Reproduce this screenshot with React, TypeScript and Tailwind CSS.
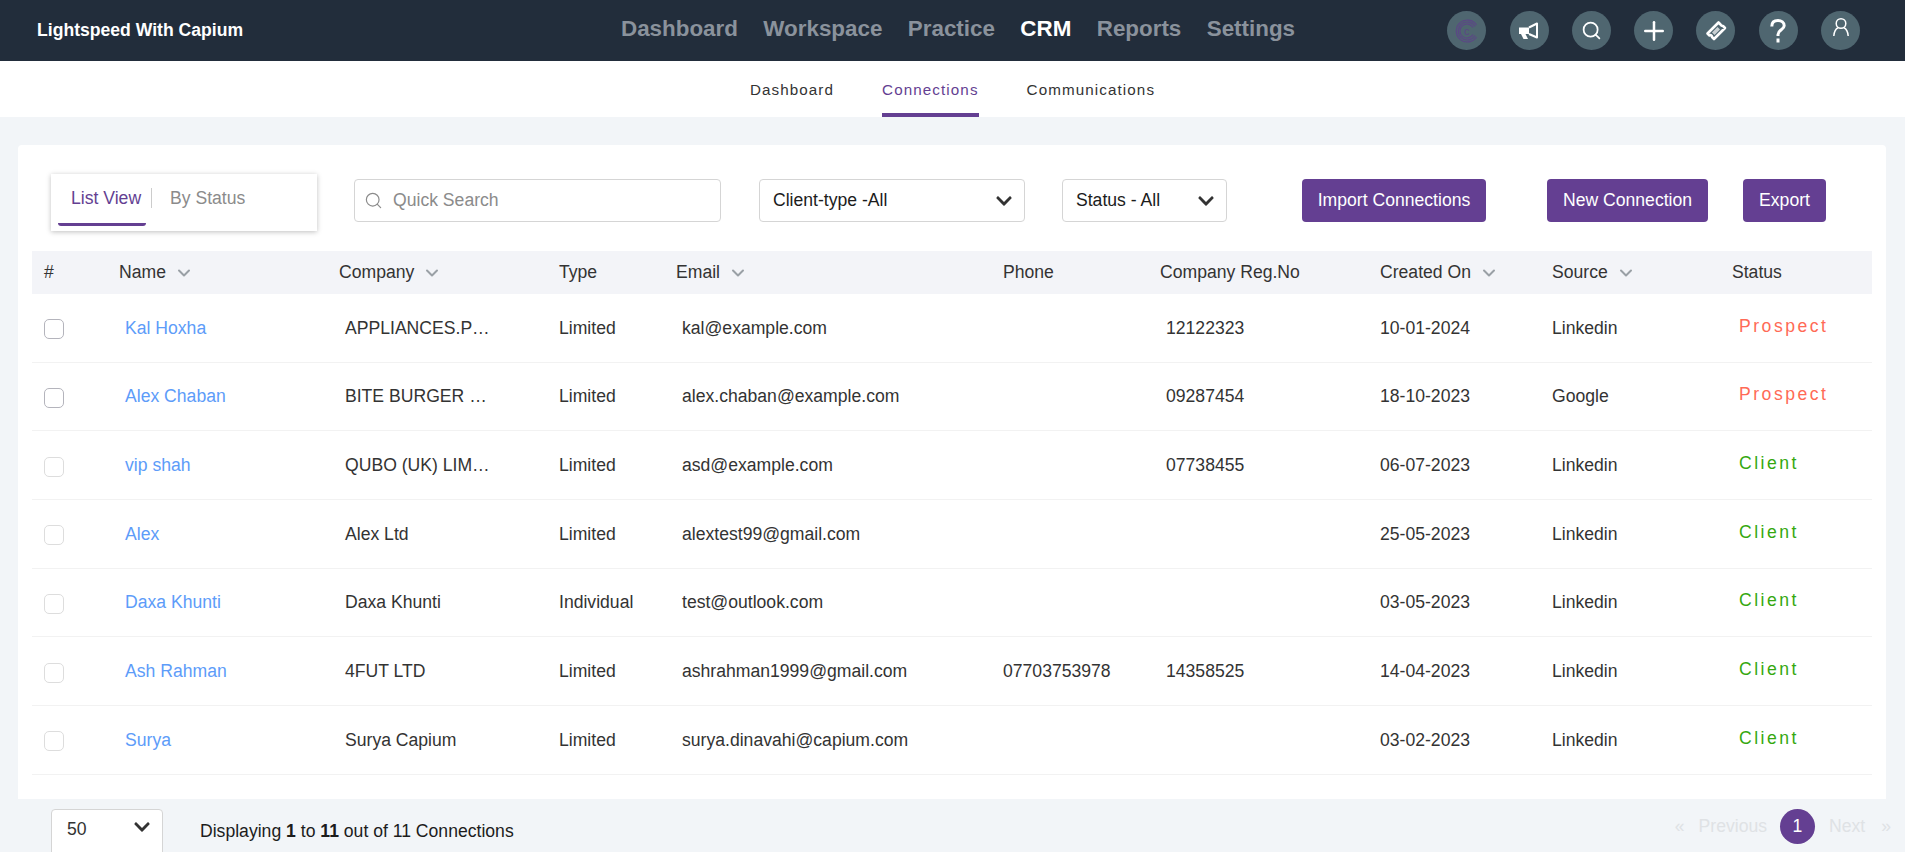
import React from 'react';
import { Search, Plus, ChevronDown } from 'lucide-react';
import { FaChevronDown } from 'react-icons/fa';

const mainNav = ['Dashboard', 'Workspace', 'Practice', 'CRM', 'Reports', 'Settings'];
const rowGrid = 'grid grid-cols-[87px_220px_220px_117px_327px_157px_220px_172px_180px_140px] items-center';

const rows = [
    { name: 'Kal Hoxha', company: 'APPLIANCES.P…', type: 'Limited', email: 'kal@example.com', phone: '', reg: '12122323', date: '10-01-2024', source: 'Linkedin', status: 'Prospect', dark: true },
    { name: 'Alex Chaban', company: 'BITE BURGER …', type: 'Limited', email: 'alex.chaban@example.com', phone: '', reg: '09287454', date: '18-10-2023', source: 'Google', status: 'Prospect', dark: true },
    { name: 'vip shah', company: 'QUBO (UK) LIM…', type: 'Limited', email: 'asd@example.com', phone: '', reg: '07738455', date: '06-07-2023', source: 'Linkedin', status: 'Client', dark: false },
    { name: 'Alex', company: 'Alex Ltd', type: 'Limited', email: 'alextest99@gmail.com', phone: '', reg: '', date: '25-05-2023', source: 'Linkedin', status: 'Client', dark: false },
    { name: 'Daxa Khunti', company: 'Daxa Khunti', type: 'Individual', email: 'test@outlook.com', phone: '', reg: '', date: '03-05-2023', source: 'Linkedin', status: 'Client', dark: false },
    { name: 'Ash Rahman', company: '4FUT LTD', type: 'Limited', email: 'ashrahman1999@gmail.com', phone: '07703753978', reg: '14358525', date: '14-04-2023', source: 'Linkedin', status: 'Client', dark: false },
    { name: 'Surya', company: 'Surya Capium', type: 'Limited', email: 'surya.dinavahi@capium.com', phone: '', reg: '', date: '03-02-2023', source: 'Linkedin', status: 'Client', dark: false },
];

const CapiumLogo = () => (
    <svg width="24" height="24" viewBox="0 0 24 24" fill="none" stroke="#5f3f8c" className="opacity-80">
        <path d="M21.5 6A11 11 0 1 0 21.5 18" strokeWidth="1.1" />
        <path d="M20 7.5A9 9 0 1 0 20 16.5" strokeWidth="1.1" />
        <path d="M18 8.5A7 7 0 1 0 18 15.5" strokeWidth="1.1" />
        <text x="9" y="16" fontSize="11" fill="#5f3f8c" stroke="none" fontFamily="Liberation Sans">c</text>
    </svg>
);

const MegaphoneIcon = () => (
    <svg width="22" height="22" viewBox="0 0 22 22" fill="none">
        <path d="M1 7.5H11V14H1Z" fill="white" />
        <path d="M3 14H7.5L10 19H5.5Z" fill="white" />
        <path d="M11 7.5L19 3.5V17.5L11 14" stroke="white" strokeWidth="2" strokeLinejoin="round" />
    </svg>
);

const TicketIcon = () => (
    <svg width="24" height="24" viewBox="0 0 24 24" fill="none">
        <path
            d="M3.5 14.5L14.5 3.5L16.5 5.5C17 6.5 18 7 19 7L21 9L10 20L8 18C8 17 7 15.5 5.5 16.5Z"
            stroke="white"
            strokeWidth="2.6"
            strokeLinejoin="round"
        />
        <path d="M8 13.5L13.5 8L16 10.5L10.5 16Z" fill="white" opacity="0.7" />
    </svg>
);

const QuestionIcon = () => (
    <svg width="16" height="24" viewBox="0 0 16 24" fill="none" stroke="white" strokeWidth="3">
        <path d="M1.8 7.5C1.8 3.5 4.5 1.6 8 1.6C11.5 1.6 14.2 3.6 14.2 6.8C14.2 10.8 8 10.8 8 15.5V17" />
        <path d="M8 19.5V23.5" />
    </svg>
);

const UserIcon = () => (
    <svg width="18" height="20" viewBox="0 0 18 20" fill="none" stroke="white" strokeWidth="1.5" className="-translate-y-[4px]">
        <circle cx="9" cy="6.5" r="4.8" />
        <path d="M1.8 19C2.2 14.5 4.5 11.5 6 10.8M16.2 19C15.8 14.5 13.5 11.5 12 10.8" />
    </svg>
);

const HeaderIcon = ({ children }: { children: React.ReactNode }) => (
    <div className="flex h-[39px] w-[39px] items-center justify-center rounded-full bg-[#4f6670] text-white">
        {children}
    </div>
);

const SortHead = ({ label }: { label: string }) => (
    <div className="flex items-center gap-[8px]">
        {label}
        <ChevronDown size={20} strokeWidth={2.4} className="mt-[2px] text-[#9aa0a6]" />
    </div>
);

const Select = ({ label, className }: { label: string; className: string }) => (
    <div className={`flex h-[43px] items-center justify-between rounded border border-[#d5d5d5] bg-white pl-[13px] pr-[11px] text-[17.6px] text-[#1c1c1c] ${className}`}>
        {label}
        <FaChevronDown size={18} className="text-[#333]" />
    </div>
);

const PurpleButton = ({ label, className }: { label: string; className: string }) => (
    <button className={`flex h-[43px] items-center justify-center rounded bg-[#643f92] text-[17.6px] text-white ${className}`}>
        {label}
    </button>
);

const App = () => {
    return (
        <div className="flex h-[852px] flex-col overflow-hidden bg-[#f2f5f8] font-['Liberation_Sans',Arial,sans-serif]">
            <header className="relative flex h-[61px] shrink-0 items-center bg-[#222d3b]">
                <div className="ml-[37px] w-[584px] text-[17.6px] font-bold text-white">Lightspeed With Capium</div>
                <nav className="flex gap-[25.4px] pb-[4px] text-[22.4px] font-bold text-[#8a929c]">
                    {mainNav.map((item) => (
                        <a key={item} className={item === 'CRM' ? 'text-white' : ''}>{item}</a>
                    ))}
                </nav>
                <div className="ml-auto mr-[45px] flex gap-[23.3px]">
                    <HeaderIcon><CapiumLogo /></HeaderIcon>
                    <HeaderIcon><MegaphoneIcon /></HeaderIcon>
                    <HeaderIcon><Search size={21} strokeWidth={2} /></HeaderIcon>
                    <HeaderIcon><Plus size={30} strokeWidth={2} /></HeaderIcon>
                    <HeaderIcon><TicketIcon /></HeaderIcon>
                    <HeaderIcon><QuestionIcon /></HeaderIcon>
                    <HeaderIcon><UserIcon /></HeaderIcon>
                </div>
            </header>

            <div className="flex h-[56px] shrink-0 justify-center gap-[48px] bg-white text-[15.2px] tracking-[1.1px] text-[#333]">
                <a className="flex h-full items-center pt-[3px]">Dashboard</a>
                <a className="flex h-full items-center border-b-4 border-[#643f92] pt-[7px] text-[#643f92]">Connections</a>
                <a className="flex h-full items-center pt-[3px]">Communications</a>
            </div>

            <main className="mx-[18px] mt-[28px] h-[654px] w-[1868px] shrink-0 rounded-t bg-white px-[14px]">
                <div className="flex items-start pt-[29px]">
                    <div className="ml-[19px] flex h-[57px] w-[266px] items-start bg-white shadow-[0_1px_5px_rgba(0,0,0,0.25)]">
                        <div className="relative ml-[7px] flex h-[52px] w-[88px] items-center pb-[4px] pl-[13px] text-[17.6px] text-[#643f92]">
                            List View
                            <span className="absolute left-[93px] top-[14px] h-[20px] w-[1px] bg-[#ccc]" />
                            <span className="absolute bottom-0 left-0 h-[3px] w-full rounded-b bg-[#643f92]" />
                        </div>
                        <div className="ml-[24px] flex h-[52px] items-center pb-[4px] text-[17.6px] text-[#8b8b8b]">By Status</div>
                    </div>
                    <div className="ml-[37px] mt-[5px] flex h-[43px] w-[367px] items-center gap-[10px] rounded border border-[#d5d5d5] pb-[1px] pl-[9px] text-[17.6px] text-[#8b8b8b]">
                        <Search size={19} strokeWidth={1.5} />
                        Quick Search
                    </div>
                    <Select label="Client-type -All" className="ml-[38px] mt-[5px] w-[266px]" />
                    <Select label="Status - All" className="ml-[37px] mt-[5px] w-[165px]" />
                    <PurpleButton label="Import Connections" className="ml-[75px] mt-[5px] w-[184px]" />
                    <PurpleButton label="New Connection" className="ml-[61px] mt-[5px] w-[161px]" />
                    <PurpleButton label="Export" className="ml-[35px] mt-[5px] w-[83px]" />
                </div>

                <div className={`${rowGrid} mt-[20px] h-[43px] bg-[#f3f4f8] text-[17.6px] text-[#333]`}>
                    <div className="pl-[12px]">#</div>
                    <SortHead label="Name" />
                    <SortHead label="Company" />
                    <div>Type</div>
                    <SortHead label="Email" />
                    <div>Phone</div>
                    <div>Company Reg.No</div>
                    <SortHead label="Created On" />
                    <SortHead label="Source" />
                    <div>Status</div>
                </div>

                {rows.map((row) => (
                    <div key={row.name} className={`${rowGrid} h-[68.7px] border-b border-[#f2f2f2] text-[17.6px] text-[#333]`}>
                        <div className="pl-[12px]">
                            <div className={`mt-[3px] h-[20px] w-[20px] rounded-[5px] border ${row.dark ? 'border-[#b4b4bc]' : 'border-[#ddd]'}`} />
                        </div>
                        <div className="pl-[6px] text-[#5d9cf9]">{row.name}</div>
                        <div className="pl-[6px]">{row.company}</div>
                        <div>{row.type}</div>
                        <div className="pl-[6px]">{row.email}</div>
                        <div>{row.phone}</div>
                        <div className="pl-[6px]">{row.reg}</div>
                        <div>{row.date}</div>
                        <div>{row.source}</div>
                        <div className={`-mt-[4px] pl-[7px] tracking-[2.5px] ${row.status === 'Prospect' ? 'text-[#ff6a56]' : 'text-[#35a80f]'}`}>{row.status}</div>
                    </div>
                ))}
            </main>

            <footer className="flex shrink-0 items-start pt-[10px]">
                <div className="ml-[51px] flex h-[50px] w-[112px] items-start justify-between rounded border border-[#d5d5d5] bg-white pl-[15px] pr-[11px] pt-[6px] text-[17.6px] text-[#333]">
                    50
                    <FaChevronDown size={18} className="mt-[2px] text-[#333]" />
                </div>
                <div className="ml-[37px] mt-[9px] text-[17.6px] text-[#1c1c1c]">
                    Displaying <b>1</b> to <b>11</b> out of 11 Connections
                </div>
                <div className="ml-auto mr-[14px] flex items-center text-[17.6px] text-[#dfe2e5]">
                    <span>«</span>
                    <span className="ml-[14px]">Previous</span>
                    <span className="ml-[13px] flex h-[35px] w-[35px] items-center justify-center rounded-full bg-[#643f92] text-white">1</span>
                    <span className="ml-[14px]">Next</span>
                    <span className="ml-[16px]">»</span>
                </div>
            </footer>
        </div>
    );
};

export default App;
